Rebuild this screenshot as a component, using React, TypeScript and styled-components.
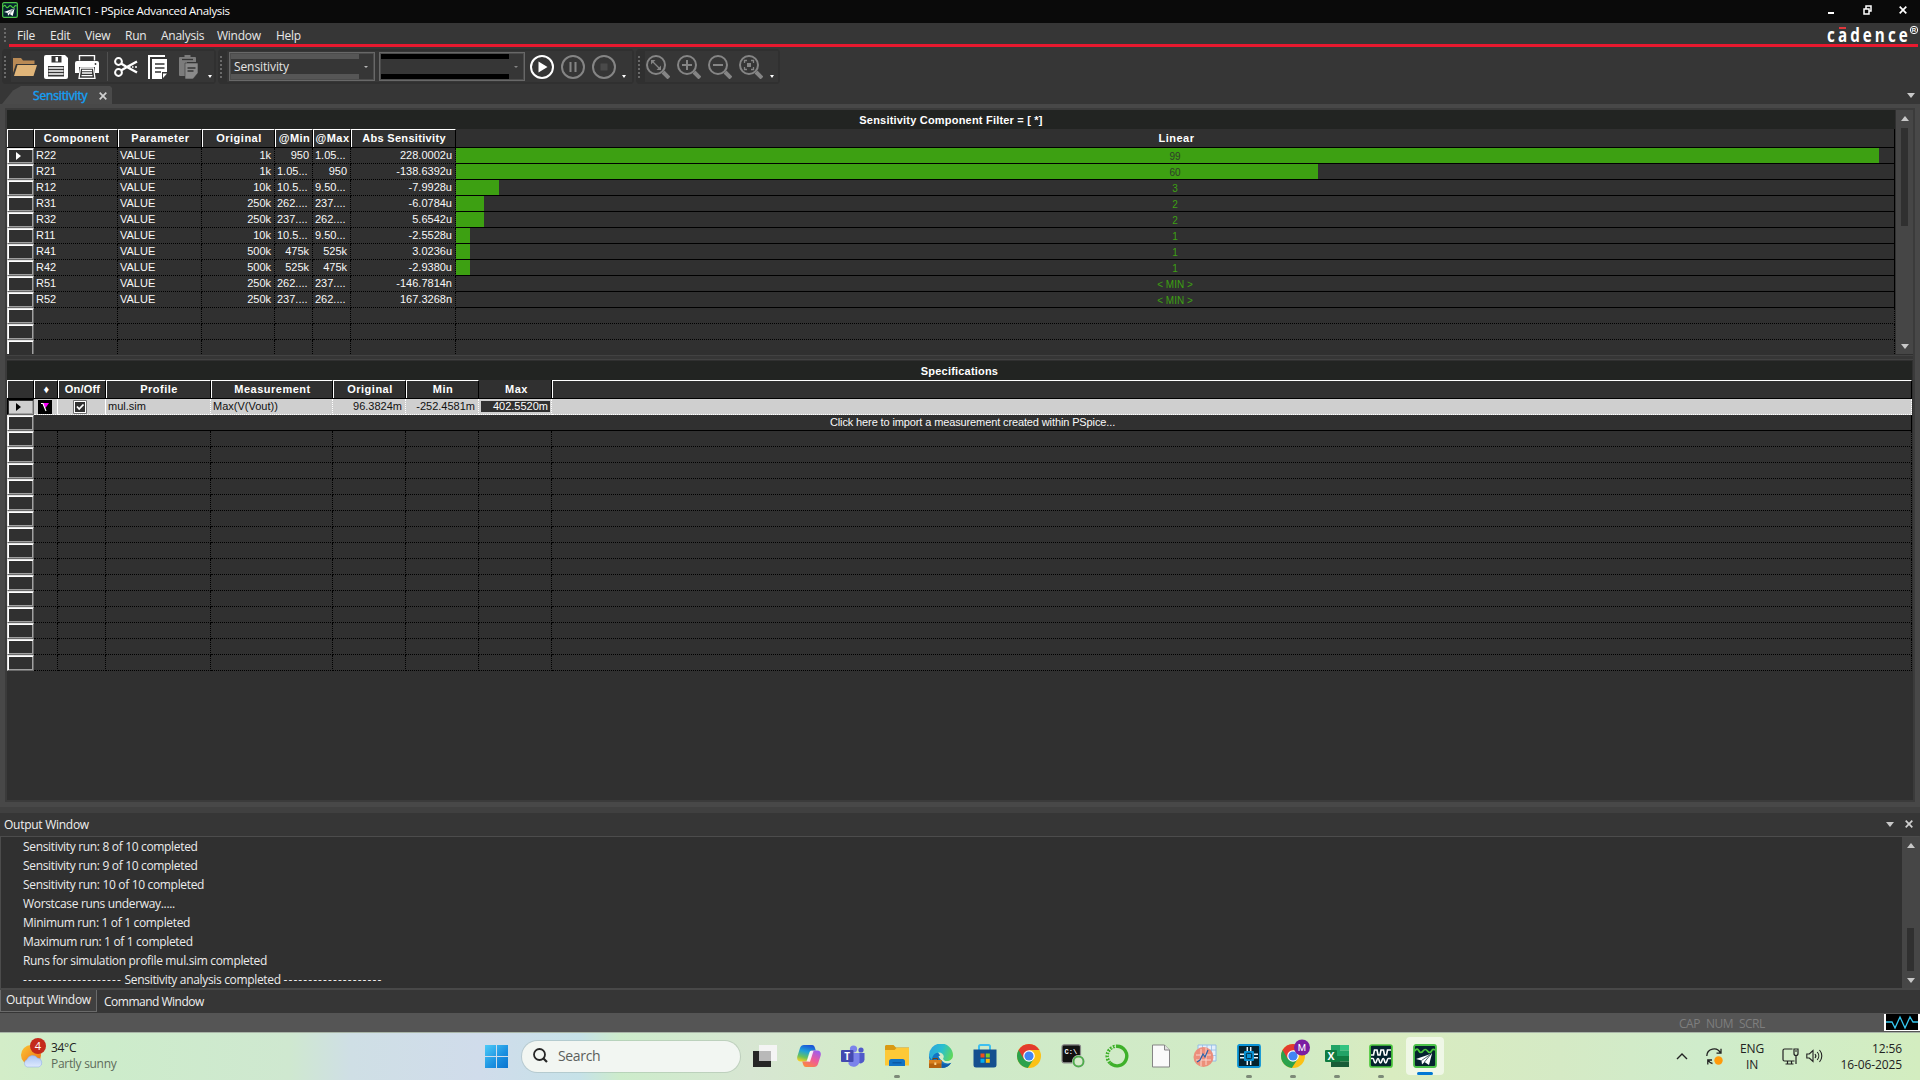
import React from "react";
import styled, { createGlobalStyle, css } from "styled-components";

const UI = `"Open Sans", "Noto Sans", sans-serif`;
const GRID = `"Liberation Sans", Arial, sans-serif`;

const Global = createGlobalStyle`
  * { box-sizing: border-box; }
  html, body { margin: 0; padding: 0; background: #363636; overflow: hidden; }
`;

const Screen = styled.div`
  width: 1920px;
  height: 1080px;
  display: flex;
  flex-direction: column;
  overflow: hidden;
  background: #363636;
  color: #f0f0f0;
  font-family: ${UI};
  font-size: 12px;
  white-space: nowrap;
`;

/* ---------- title bar and menu ---------- */

const TitleBar = styled.header`
  height: 23px;
  flex: none;
  display: flex;
  align-items: center;
  justify-content: space-between;
  background: #0a0a0a;
  padding: 0 13px 3px 2px;
`;
const TitleLeft = styled.div`
  display: flex;
  align-items: center;
  gap: 8px;
  height: 20px;
`;
const Title = styled.span`
  line-height: 20px;
  padding-top: 2px;
  font-size: 11.5px;
  letter-spacing: -0.33px;
  color: #fff;
`;
const WindowButtons = styled.div`
  display: flex;
  align-items: center;
  gap: 27px;
`;

const MenuBar = styled.nav`
  height: 21px;
  flex: none;
  display: flex;
  align-items: center;
  padding: 3px 1px 0 4px;
`;
const Grip = styled.i<{ $h: number }>`
  width: 2px;
  height: ${(p) => p.$h}px;
  flex: none;
  background: repeating-linear-gradient(#6a6a6a 0 2px, transparent 2px 4px);
`;
const MenuItems = styled.div`
  flex: 1;
  display: flex;
  gap: 15px;
  padding: 2px 0 0 11px;
`;
const MenuItem = styled.span<{ $w: number }>`
  width: ${(p) => p.$w}px;
  line-height: 18px;
  letter-spacing: -0.25px;
  color: #e8e8e8;
`;
const BrandMark = styled.svg`
  flex: none;
  margin: -7px 0 -4px;
`;
const RedLine = styled.div`
  height: 3px;
  flex: none;
  margin: 0 2px 0 9px;
  background: #e8192f;
`;

/* ---------- toolbar ---------- */

const ToolRow = styled.div`
  height: 39px;
  flex: none;
  display: flex;
  padding: 2px 0 0 2px;
  gap: 2px;
`;
const ToolGroup = styled.div<{ $w: number }>`
  width: ${(p) => p.$w}px;
  height: 35px;
  display: flex;
  align-items: center;
  padding: 2px 2px 2px 2px;
  border-radius: 4px;
  background: #303030;
`;
const ToolBody = styled.div<{ $gap: number; $pad: number }>`
  flex: 1;
  height: 31px;
  margin-left: 5px;
  display: flex;
  align-items: center;
  gap: ${(p) => p.$gap}px;
  padding-left: ${(p) => p.$pad}px;
  background: #363636;
`;
const ToolSep = styled.i`
  width: 1px;
  height: 29px;
  background: #505050;
  margin: 0 -1px 0 1px;
`;
const DropMark = styled.i`
  width: 0;
  height: 0;
  align-self: flex-end;
  margin-bottom: 4px;
  border: 2.5px solid transparent;
  border-top: 3px solid #fff;
  border-bottom: 0;
`;
const Combo = styled.div<{ $w: number; $stripe: string }>`
  width: ${(p) => p.$w}px;
  height: 29px;
  border: 1px solid #686868;
  box-shadow: inset 0 0 0 1px #4c4c4c;
  padding: 1px;
  display: flex;
  align-items: stretch;
  background: #363636;
  & > span {
    flex: 1;
    border-top: 5px solid ${(p) => p.$stripe};
    border-bottom: 5px solid ${(p) => p.$stripe};
    padding-left: 3px;
    line-height: 15px;
    letter-spacing: -0.1px;
    color: #e4e4e4;
  }
  & > b {
    width: 14px;
    display: flex;
    align-items: center;
    justify-content: center;
  }
`;
const Caret = styled.i<{ $up?: boolean; $c?: string; $s?: number }>`
  width: 0;
  height: 0;
  display: block;
  flex: none;
  border-left: ${(p) => p.$s ?? 4.5}px solid transparent;
  border-right: ${(p) => p.$s ?? 4.5}px solid transparent;
  ${(p) =>
    p.$up
      ? css`border-bottom: ${p.$s ?? 5}px solid ${p.$c ?? "#c8c8c8"};`
      : css`border-top: ${p.$s ?? 5}px solid ${p.$c ?? "#c8c8c8"};`}
`;

/* ---------- document tab ---------- */

const TabStrip = styled.div`
  height: 18px;
  flex: none;
  display: flex;
  align-items: center;
  justify-content: space-between;
  padding: 0 5px 0 2px;
`;
const DocTab = styled.div`
  width: 110px;
  height: 18px;
  display: flex;
  align-items: center;
  justify-content: space-between;
  padding: 1px 5px 0 31px;
  background: #4a4a4a;
  clip-path: polygon(0 100%, 11px 25%, 19px 0, 108px 0, 110px 2px, 110px 100%);
  color: #14a0f5;
  line-height: 18px;
  -webkit-text-stroke: 0.4px #14a0f5;
  letter-spacing: -0.15px;
`;

/* ---------- grids ---------- */

const Workspace = styled.main`
  height: 703px;
  flex: none;
  padding: 4px 5px 5px 5px;
  background: #484848;
`;
const Frame = styled.div`
  height: 694px;
  border: 2px solid #3b3b3b;
  background: #303030;
  display: flex;
  flex-direction: column;
  font-family: ${GRID};
  font-size: 11px;
`;
const TopPane = styled.section`
  height: 244px;
  flex: none;
  display: flex;
  justify-content: space-between;
  overflow: hidden;
`;
const Splitter = styled.div`
  height: 7px;
  flex: none;
  background: #363636;
  border-top: 1px solid #303030;
  border-bottom: 1px solid #303030;
  box-shadow: inset 0 1px 0 #424242, inset 0 -1px 0 #424242;
`;
const Table = styled.div<{ $w: number }>`
  width: ${(p) => p.$w}px;
  flex: none;
`;
const Band = styled.h2`
  height: 19px;
  margin: 0;
  background: #222422;
  text-align: center;
  font-size: 11px;
  line-height: 20px;
  letter-spacing: 0.2px;
  color: #fff;
`;
const HeadRow = styled.div`
  display: flex;
  height: 19px;
  border-bottom: 1px solid #000;
`;
const Head = styled.div<{ $w: number; $plain?: boolean; $ls?: number }>`
  width: ${(p) => p.$w}px;
  flex: none;
  border-right: 1px solid #000;
  ${(p) =>
    !p.$plain &&
    css`
      border-left: 1px solid #fff;
      border-top: 1px solid #fff;
    `}
  padding: ${(p) => (p.$plain ? "1px 0 0 3px" : "0 0 0 1px")};
  text-align: center;
  font-weight: 700;
  line-height: 17px;
  letter-spacing: ${(p) => p.$ls ?? 0.5}px;
  color: #fff;
  overflow: hidden;
`;
const Row = styled.div<{ $tone?: "light" }>`
  display: flex;
  height: 16px;
  background: ${(p) => (p.$tone ? "#cfcfcf" : "#303030")};
  color: ${(p) => (p.$tone ? "#111" : "#f8f8f8")};
`;
const Handle = styled.div<{ $dark?: boolean }>`
  width: 27px;
  flex: none;
  border: 1px solid;
  border-color: ${(p) => (p.$dark ? "#000 #696969 #696969 #000" : "#e3e3e3 #696969 #696969 #e3e3e3")};
  box-shadow: inset 1px 1px 0 #fff, inset -1px -1px 0 #a0a0a0;
  background: #303030;
  display: flex;
  align-items: center;
  padding-left: 8px;
  ${(p) => p.$dark && css`background: #cfcfcf; box-shadow: inset 1px 1px 0 #303030, inset -1px -1px 0 #a0a0a0;`}
`;
const Pointer = styled.i<{ $c: string }>`
  width: 0;
  height: 0;
  border: 4.5px solid transparent;
  border-left: 5px solid ${(p) => p.$c};
  border-right: 0;
`;
const Cell = styled.div<{ $w: number; $a?: string; $line?: string }>`
  width: ${(p) => p.$w}px;
  flex: none;
  border-right: 1px dotted ${(p) => p.$line ?? "#000"};
  border-bottom: 1px dotted ${(p) => p.$line ?? "#000"};
  padding: 0 3px 0 2px;
  line-height: 14px;
  text-align: ${(p) => p.$a ?? "left"};
  overflow: hidden;
`;
const BarCell = styled.div`
  flex: 1;
  display: grid;
  border-right: 1px solid #000;
  border-bottom: 1px solid #000;
  font-size: 10px;
  line-height: 17px;
  & > * { grid-area: 1 / 1; height: 15px; }
`;
const Bar = styled.i`
  display: block;
  background: #3da012;
`;
const BarLabel = styled.span<{ $over?: boolean }>`
  text-align: center;
  color: ${(p) => (p.$over ? "#303a2c" : "#3da012")};
`;
const ImportRow = styled.div`
  flex: 1;
  border-right: 1px solid #000;
  border-bottom: 1px solid #000;
  text-align: center;
  line-height: 14px;
  letter-spacing: -0.12px;
`;
const Selected = styled.span`
  display: block;
  height: 11px;
  margin: 2px -2px 0 0;
  padding-right: 2px;
  line-height: 10px;
  background: #303030;
  color: #fff;
`;
const Flag = styled.div`
  width: 24px;
  flex: none;
  display: flex;
  align-items: center;
  padding-left: 4px;
  border-right: 1px solid #fff;
  border-bottom: 1px dotted #fff;
`;
const CheckCell = styled.div`
  width: 48px;
  flex: none;
  display: flex;
  align-items: center;
  padding-left: 15px;
  border-right: 1px solid #fff;
  border-bottom: 1px dotted #fff;
`;
const ScrollBar = styled.div<{ $h: number; $thumbTop: number; $thumb: number }>`
  width: 17px;
  height: ${(p) => p.$h}px;
  flex: none;
  display: grid;
  justify-items: center;
  align-content: stretch;
  grid-template-rows: ${(p) => p.$thumbTop}px ${(p) => p.$thumb}px 1fr;
  background: #464646;
  padding: 6px 0 5px;
  & > b { width: 7px; height: 100%; background: #303030; }
  & > :last-child { align-self: end; }
  & > :first-child { align-self: start; }
`;

/* ---------- output window ---------- */

const Gutter = styled.div`
  height: 6px;
  flex: none;
  background: #404040;
`;
const OutHead = styled.div`
  height: 23px;
  flex: none;
  display: flex;
  align-items: center;
  justify-content: space-between;
  padding: 0 7px 1px 4px;
  letter-spacing: -0.27px;
`;
const HeadTools = styled.div`
  display: flex;
  align-items: center;
  gap: 11px;
`;
const OutBody = styled.div`
  height: 154px;
  flex: none;
  display: flex;
  justify-content: space-between;
  border: 1px solid #4c4c4c;
  border-bottom: 2px solid #484848;
  border-right-color: #464646;
  background: #303030;
`;
const Log = styled.div`
  padding-left: 22px;
`;
const LogLine = styled.div`
  height: 19px;
  line-height: 19px;
  letter-spacing: -0.33px;
  color: #ececec;
`;
const Dashes = styled.span`
  letter-spacing: 1.08px;
`;
const OutTabs = styled.div`
  height: 23px;
  flex: none;
  display: flex;
  align-items: flex-start;
`;
const OutTab = styled.div<{ $on?: boolean }>`
  height: 22px;
  line-height: ${(p) => (p.$on ? 20 : 23)}px;
  padding: 0 5px;
  letter-spacing: -0.5px;
  ${(p) =>
    p.$on &&
    css`
      width: 97px;
      border: 1px solid #6a6a6a;
      border-top: 0;
      background: #404040;
      margin-right: 2px;
      letter-spacing: -0.27px;
    `}
`;
const StatusBar = styled.footer`
  height: 19px;
  flex: none;
  display: flex;
  align-items: center;
  justify-content: flex-end;
  background: #555;
  color: #7e7e7e;
`;
const Keys = styled.div`
  display: flex;
  gap: 6px;
  width: 205px;
  padding-top: 2px;
  letter-spacing: -0.5px;
`;

/* ---------- taskbar ---------- */

const TaskBar = styled.div`
  height: 48px;
  flex: none;
  display: flex;
  align-items: stretch;
  border-top: 1px solid #a9b5a8;
  background: linear-gradient(
    90deg,
    #d3edc8 0, #cdeccb 110px, #cfe8d0 290px, #cfdfe5 350px, #d0dceb 480px,
    #c6e2e8 580px, #cdeccb 620px, #d7e6d2 750px, #d2ecc7 880px, #cfeac9 960px,
    #d2ebc5 1300px, #d9ecc0 1390px, #d5eac5 1560px, #cfeccb 1700px, #d3edc0 1920px
  );
  color: #222;
`;
const Weather = styled.div`
  width: 485px;
  padding: 4px 0 0 19px;
  display: flex;
  gap: 5px;
`;
const WeatherText = styled.div`
  padding-top: 3px;
  line-height: 16px;
  letter-spacing: -0.3px;
  & > div + div { color: #5d6b5a; }
`;
const Start = styled.div`
  width: 37px;
  padding-top: 12px;
`;
const SearchBox = styled.div`
  width: 218px;
  height: 31px;
  margin: 8px 3px 0 0;
  border-radius: 16px;
  background: #f2f6f2;
  box-shadow: 0 0 0 1px rgba(120, 140, 130, 0.25);
  display: flex;
  align-items: center;
  gap: 10px;
  padding: 0 0 2px 11px;
  font-size: 14px;
  letter-spacing: -0.35px;
  color: #5c5f5c;
`;
const Task = styled.div<{ $state?: "open" | "active" }>`
  width: 44px;
  height: 47px;
  display: grid;
  grid-template-rows: 39px 3px;
  justify-items: center;
  align-items: center;
  padding-top: 3px;
  & > svg { grid-area: 1 / 1; }
  & > i {
    grid-area: 2 / 1;
    width: ${(p) => (p.$state === "active" ? 16 : 6)}px;
    height: 3px;
    border-radius: 2px;
    background: ${(p) => (p.$state === "active" ? "#0078d4" : "#7d8a78")};
  }
  ${(p) =>
    p.$state === "active" &&
    css`
      background: rgba(255, 255, 255, 0.6);
      width: 38px;
      height: 38px;
      margin: 4px 3px 0;
      border-radius: 4px;
      padding-top: 0;
      grid-template-rows: 35px 3px;
      & > svg { margin-top: 2px; }
    `}
`;
const Tray = styled.div`
  flex: 1;
  display: flex;
  justify-content: flex-end;
  align-items: center;
  padding: 0 18px 1px 0;
`;
const TrayText = styled.div<{ $w: number; $a: string }>`
  width: ${(p) => p.$w}px;
  text-align: ${(p) => p.$a};
  line-height: 16px;
  padding-top: 2px;
  letter-spacing: -0.1px;
`;
const TrayIcon = styled.div<{ $mr: number }>`
  display: flex;
  margin-right: ${(p) => p.$mr}px;
`;

/* ---------- icons ---------- */

const CloseX = ({ s = 8, c = "#d0d0d0" }: { s?: number; c?: string }) => (
  <svg width={s} height={s} viewBox="0 0 8 8" stroke={c} strokeWidth="1.7">
    <path d="M.7.7l6.6 6.6M7.3.7L.7 7.3" />
  </svg>
);

const PSpiceIcon = ({ s }: { s: number }) => (
  <svg width={s} height={s} viewBox="0 0 24 24">
    <rect x="1" y="1" width="22" height="22" rx="2" fill="#04222e" stroke="#4cc24a" strokeWidth="1.8" />
    <path d="M2 7c1.500-3 3-2 4 0s2.500 2 4 0 3-2 4.500 0 3 2 4 0 2-2 3.500-1" fill="none" stroke="#4cc83c" strokeWidth="1.700" />
    <path d="M3 15L19 9.500 16 21l-4.500-3L9 20.500l-.5-4z" fill="#fff" />
    <path d="M8.500 16.500L18 10l-6.500 8" fill="none" stroke="#04222e" strokeWidth=".7" />
  </svg>
);

const WaveIcon = () => (
  <svg width="24" height="24" viewBox="0 0 24 24" fill="none">
    <rect x="1" y="1" width="22" height="22" rx="2" fill="#04222e" stroke="#4cc83c" strokeWidth="1.700" />
    <path d="M2 11h2.500l1-5H8l1 5h2l1-5h2.500l1 5h2l1-5H22" stroke="#fff" strokeWidth="1.600" />
    <path d="M2 14.500h2c1.200 0 .8 4.500 2.300 4.500s1.200-4.500 2.700-4.500 1 4.500 2.500 4.500 1.200-4.500 2.700-4.500 1 4.500 2.500 4.500 1.200-4.500 2.500-4.500H22" stroke="#fff" strokeWidth="1.600" />
  </svg>
);

const Lens = ({ children }: { children: React.ReactNode }) => (
  <svg width="24" height="24" viewBox="0 0 24 24" fill="none" stroke="#858585" strokeWidth="2">
    <circle cx="10" cy="10" r="9" />
    <path d="M17 17l6 6" strokeWidth="4" />
    {children}
  </svg>
);

const Chrome = ({ badge }: { badge?: boolean }) => (
  <svg width="30" height="32" viewBox="-3 -4 30 32" overflow="visible">
    <circle cx="12" cy="12" r="12" fill="#fbc116" />
    <path d="M12 12L1.600 6A12 12 0 0 0 10.800 23.950L17 14.500z" fill="#2ba24c" />
    <path d="M12 12V6h10.400A12 12 0 0 0 1.600 6L6.800 15z" fill="#e33b2e" />
    <circle cx="12" cy="12" r="5.800" fill="#fff" />
    <circle cx="12" cy="12" r="4.600" fill="#4285f4" />
    {badge && (
      <>
        <circle cx="21" cy="3.500" r="8" fill="#7b1fa2" />
        <text x="21" y="7" textAnchor="middle" fontSize="9.500" fontFamily="Roboto" fill="#fff">M</text>
      </>
    )}
  </svg>
);

const Weather34 = () => (
  <svg width="27" height="32" viewBox="0 0 27 32">
    <defs>
      <linearGradient id="sun" x1="0" y1="0" x2="1" y2="1">
        <stop offset="0" stopColor="#fbc534" />
        <stop offset="1" stopColor="#ee6d12" />
      </linearGradient>
      <linearGradient id="cloud" x1="0" y1="0" x2="0" y2="1">
        <stop offset="0" stopColor="#a9c4f5" />
        <stop offset="1" stopColor="#dfeafd" />
      </linearGradient>
    </defs>
    <circle cx="12" cy="18" r="10" fill="url(#sun)" />
    <path d="M8 30a4 4 0 0 1 0-7.500 6 6 0 0 1 10.500-1.500A4.700 4.700 0 0 1 20 30z" fill="url(#cloud)" stroke="#8ba8e6" strokeWidth=".5" />
    <circle cx="19" cy="9" r="8" fill="#c42b1c" />
    <text x="19" y="13" fontSize="11" textAnchor="middle" fill="#fff" fontFamily="Open Sans">4</text>
  </svg>
);

const WinLogo = () => (
  <svg width="23" height="23" viewBox="0 0 23 23">
    <defs>
      <linearGradient id="win" x1="0" y1="0" x2="1" y2="1">
        <stop offset="0" stopColor="#4ccbf8" />
        <stop offset=".6" stopColor="#1a8fe0" />
        <stop offset="1" stopColor="#0a74cf" />
      </linearGradient>
    </defs>
    <path d="M0 0h11v11H0zM12 0h11v11H12zM0 12h11v11H0zM12 12h11v11H12z" fill="url(#win)" />
  </svg>
);

const TaskView = () => (
  <svg width="24" height="24" viewBox="0 0 24 24">
    <rect x="0" y="7" width="18" height="16" fill="#262626" />
    <rect x="6" y="1" width="18" height="16" fill="#f4f4f4" />
    <rect x="6" y="7" width="12" height="10" fill="#b9b9b9" />
  </svg>
);

const Copilot = () => (
  <svg width="24" height="22" viewBox="0 0 24 22">
    <defs>
      <linearGradient id="cpa" x1=".6" y1="0" x2=".3" y2="1">
        <stop offset="0" stopColor="#1b54d8" />
        <stop offset=".4" stopColor="#1ea2d8" />
        <stop offset=".75" stopColor="#6cc35a" />
        <stop offset="1" stopColor="#f2cf25" />
      </linearGradient>
      <linearGradient id="cpb" x1=".8" y1="0" x2=".2" y2="1">
        <stop offset="0" stopColor="#9a5cf0" />
        <stop offset=".5" stopColor="#ee5a9a" />
        <stop offset="1" stopColor="#fb8a3c" />
      </linearGradient>
    </defs>
    <path d="M7 0h8c2 0 2.600 1.500 3 3l.8 2.500H15c-1.500 0-2.300.8-2.800 2.300L10 15c-.5 1.200-1.200 1.500-2.500 1.500H4C.5 16.500-.3 14 .4 11.300L3 3c.7-2 2-3 4-3z" fill="url(#cpa)" />
    <path d="M17 22H9c-2 0-2.600-1.500-3-3l-.8-2.500H9c1.500 0 2.300-.8 2.800-2.300L14 7c.5-1.200 1.200-1.500 2.500-1.500H20c3.500 0 4.300 2.500 3.600 5.200L21 19c-.7 2-2 3-4 3z" fill="url(#cpb)" />
    <path d="M13.500 6l-3.500 10.500 3 .2L16.500 6z" fill="#fff" opacity=".85" />
  </svg>
);

const Teams = () => (
  <svg width="24" height="22" viewBox="0 0 24 22">
    <circle cx="20" cy="5" r="2.600" fill="#5059c9" />
    <path d="M16 8h7.500v6.500a4 4 0 0 1-6 3.300z" fill="#5059c9" />
    <circle cx="12.500" cy="4" r="3.600" fill="#7b83eb" />
    <path d="M8 8h10.500v7a6 6 0 0 1-11 4z" fill="#7b83eb" />
    <rect x="0" y="5" width="12.500" height="12" rx="1" fill="#4349b0" />
    <text x="6.200" y="14.500" fontSize="10" fontWeight="700" textAnchor="middle" fill="#fff" fontFamily="Open Sans">T</text>
  </svg>
);

const Explorer = () => (
  <svg width="24" height="22" viewBox="0 0 24 22">
    <path d="M0 1.500C0 .6.600 0 1.500 0h7L11 2.500h13V12H0z" fill="#d99a12" />
    <path d="M0 5h9.500l2-2H24v17.500H0z" fill="#fdc937" />
    <path d="M4 21v-4.500c0-1.500.8-2.500 2.300-2.500h11.400c1.500 0 2.300 1 2.300 2.500V21z" fill="#1173c6" />
    <rect x="7.500" y="17" width="9" height="1.500" fill="#0b5aa6" />
  </svg>
);

const Edge = () => (
  <svg width="24" height="24" viewBox="0 0 24 24">
    <defs>
      <linearGradient id="edge" x1="0" y1=".3" x2="1" y2=".6">
        <stop offset="0" stopColor="#2da4dd" />
        <stop offset=".5" stopColor="#29bfd0" />
        <stop offset="1" stopColor="#5fd85a" />
      </linearGradient>
    </defs>
    <path d="M0 12C0 18 4 24 13 24c4 0 7-2 9.500-5.500-4 1.500-9 0-9.500-4.500L8 7z" fill="#1374c4" />
    <path d="M0 12A12 12 0 0 1 24 11c0 4-3 6-6 6s-4.500-1.500-3.500-3.500C15.500 11 13 8.500 10 8.500 6 8.500 3 11.500 3 16z" fill="url(#edge)" />
    <path d="M9.500 12.500c2.500-2.500 5-1 4.800.8-1 2 .5 4 3.700 4 2 0 3.500-.5 5-1.800l-.5 3c-3 1.500-6.500 1-8.500-.8-2-1.500-3.500-3-4.500-5.200z" fill="#d4ecc8" />
    <path d="M13 19.500c3 1.500 6.500 1 9-.5-2 3.500-6 5-9 4.800z" fill="#0f5aa8" />
    <rect x="0" y="16" width="12.500" height="8" fill="#b5620f" />
    <path d="M0 16h12.500v3.500H0z" fill="#d9801f" />
    <path d="M4 16v-1.500h4.500V16" fill="none" stroke="#7a4209" />
    <rect x="5.300" y="18.500" width="2" height="2.500" fill="#fbd28b" />
  </svg>
);

const Store = () => (
  <svg width="24" height="24" viewBox="0 0 24 24">
    <path d="M6 6V2.500C6 1.500 6.700 1 7.500 1h8c.8 0 1.500.5 1.500 1.500V6" fill="none" stroke="#3fc0f0" strokeWidth="2" />
    <path d="M.5 5.500h23V21c0 1.700-1 2.500-2.500 2.500H3C1.500 23.500.5 22.700.5 21z" fill="#15508f" />
    <path d="M7.500 9.500h4v4h-4z" fill="#f1511b" />
    <path d="M12.800 9.500h4v4h-4z" fill="#80cc28" />
    <path d="M7.500 14.800h4v4h-4z" fill="#00adef" />
    <path d="M12.800 14.800h4v4h-4z" fill="#fbbc09" />
  </svg>
);

const Cmd = () => (
  <svg width="24" height="24" viewBox="0 0 24 24">
    <rect x="1" y=".8" width="18.500" height="18" rx="2" fill="#111" stroke="#8a8a8a" strokeWidth="1.200" />
    <text x="3.500" y="9.500" fontSize="7" fontWeight="700" fill="#fff" fontFamily="Liberation Mono">C:\</text>
    <circle cx="17.500" cy="17.500" r="5" fill="#d4ecc8" stroke="#d8d8d8" strokeWidth="3" />
    <circle cx="17.500" cy="17.500" r="5" fill="none" stroke="#4fae4b" strokeWidth="2" />
  </svg>
);

const Anaconda = () => (
  <svg width="24" height="24" viewBox="0 0 24 24" fill="none" stroke="#3eb02a">
    <path d="M12 2.200a9.800 9.800 0 1 1-7 16.700" strokeWidth="3.400" />
    <path d="M5 18.900A9.800 9.800 0 0 1 12 2.200" strokeWidth="3.400" strokeDasharray="2 1.100" />
    <path d="M3.800 17.500A9.800 9.800 0 0 1 10 2.500" strokeWidth="1" stroke="#d4ecc8" strokeDasharray="1.500 1.500" />
  </svg>
);

const Paper = () => (
  <svg width="18" height="24" viewBox="0 0 18 24">
    <path d="M.5 1h12l5 5v17H.5z" fill="#fafafa" stroke="#858585" />
    <path d="M12.500 1v5h5" fill="#e2e2e2" stroke="#858585" />
  </svg>
);

const ChartIcon = () => (
  <svg width="24" height="24" viewBox="0 0 24 24">
    <path d="M5 1h18v16H5z" fill="#e4effb" stroke="#94bde6" />
    <path d="M9.500 1v16M14 1v16M18.500 1v16M5 6h18M5 11.500h18" stroke="#94bde6" strokeWidth=".8" />
    <circle cx="10.500" cy="13" r="10" fill="#ef8873" opacity=".92" />
    <path d="M3 11h15M3 16h15M8 5v17M13 4v17" stroke="#fbd5cc" strokeWidth="1" />
    <path d="M4 18l3-2 3-6 2 3 3-7" fill="none" stroke="#2b62a8" strokeWidth="1.200" />
  </svg>
);

const Chip = () => (
  <svg width="24" height="24" viewBox="0 0 24 24">
    <rect x="1" y="1" width="22" height="22" rx="1.500" fill="#04222e" stroke="#0a93d6" strokeWidth="1.800" />
    <path d="M3 10.300h4M3 13.700h4M17 10.300h4M17 13.700h4M10.300 3v4M13.700 3v4M10.300 17v4M13.700 17v4" stroke="#e8f4fa" strokeWidth="1.500" />
    <rect x="7" y="7" width="10" height="10" rx="1" fill="#0a93d6" />
    <rect x="9.300" y="9.300" width="5.400" height="5.400" rx="1" fill="#0a93d6" stroke="#04222e" strokeWidth="1" />
  </svg>
);

const Excel = () => (
  <svg width="24" height="22" viewBox="0 0 24 22">
    <path d="M6 0h9v22H6z" fill="#21a366" />
    <path d="M15 0h9v5.500h-9z" fill="#33c481" />
    <path d="M15 5.500h9V11h-9z" fill="#21a366" />
    <path d="M6 11h9v5.500H6z" fill="#107c41" />
    <path d="M15 11h9v5.500h-9z" fill="#107c41" />
    <path d="M6 16.500h18V22H6z" fill="#185c37" />
    <rect x="0" y="5" width="12" height="12" rx="1" fill="#107c41" />
    <text x="6" y="14.800" fontSize="10.500" fontWeight="700" textAnchor="middle" fill="#fff" fontFamily="Open Sans">X</text>
  </svg>
);

/* ---------- data ---------- */

const cols = [84, 84, 73, 38, 38, 105];
const chartWidth = 1438;

type Sens = [string, string, string, string, string, number];
const sens: Sens[] = [
  ["R22", "1k", "950", "1.05...", "228.0002u", 99],
  ["R21", "1k", "1.05...", "950", "-138.6392u", 60],
  ["R12", "10k", "10.5...", "9.50...", "-7.9928u", 3],
  ["R31", "250k", "262....", "237....", "-6.0784u", 2],
  ["R32", "250k", "237....", "262....", "5.6542u", 2],
  ["R11", "10k", "10.5...", "9.50...", "-2.5528u", 1],
  ["R41", "500k", "475k", "525k", "3.0236u", 1],
  ["R42", "500k", "525k", "475k", "-2.9380u", 1],
  ["R51", "250k", "262....", "237....", "-146.7814n", 0],
  ["R52", "250k", "237....", "262....", "167.3268n", 0],
];

const specCols = [24, 48, 105, 122, 73, 73, 73];

const log = [
  "Sensitivity run: 8 of 10 completed",
  "Sensitivity run: 9 of 10 completed",
  "Sensitivity run: 10 of 10 completed",
  "Worstcase runs underway.....",
  "Minimum run: 1 of 1 completed",
  "Maximum run: 1 of 1 completed",
  "Runs for simulation profile mul.sim completed",
];

const menu: [string, number][] = [
  ["File", 18], ["Edit", 20], ["View", 25], ["Run", 21], ["Analysis", 41], ["Window", 44], ["Help", 30],
];

/* ---------- sections ---------- */

function Tools() {
  return (
    <ToolRow>
      <ToolGroup $w={214}>
        <Grip $h={22} />
        <ToolBody $gap={7} $pad={2}>
          <svg width="24" height="18" viewBox="0 0 24 18">
            <path d="M0 0h8l2 2.500h11.500V6H3L0 15z" fill="#b98a55" />
            <path d="M4.500 7H24l-3.500 11H1z" fill="#e0b579" />
          </svg>
          <svg width="24" height="24" viewBox="0 0 24 24">
            <path d="M2 0h19l3 3v19a2 2 0 0 1-2 2H2a2 2 0 0 1-2-2V2a2 2 0 0 1 2-2z" fill="#fff" />
            <path d="M7.500 1h10v6.500h-10zM4 11h16v10.500H4z" fill="#363636" />
            <path d="M11.500 2h2.500v4.500h-2.500z" fill="#fff" />
            <path d="M4.500 13h15M4.500 16h15M4.500 19h15" stroke="#fff" strokeWidth="1.400" />
          </svg>
          <svg width="24" height="24" viewBox="0 0 24 24">
            <path d="M4.500 5.500v-5h15v5" fill="none" stroke="#fff" strokeWidth="1.400" />
            <path d="M2 6h20a2 2 0 0 1 2 2v10h-4v-6H4v6H0V8a2 2 0 0 1 2-2z" fill="#fff" />
            <path d="M5.500 13h13l1.500 10.500H4z" fill="#363636" stroke="#fff" strokeWidth="1.300" />
            <path d="M7 15.500h10M7 18h10M6.500 20.700h11" stroke="#fff" strokeWidth="1.300" />
            <circle cx="20.500" cy="9" r=".9" fill="#363636" />
          </svg>
          <ToolSep />
          <svg width="24" height="20" viewBox="0 0 24 20" fill="none" stroke="#fff">
            <circle cx="4.500" cy="4.500" r="3.400" strokeWidth="2" />
            <circle cx="4.500" cy="15.500" r="3.400" strokeWidth="2" />
            <path d="M7 6.500L12 9.500 23 15.500M7 13.500L12 10.500 23 4.500" strokeWidth="2.400" />
            <path d="M15 10h1.500M18 10h1.500M21 10h2" strokeWidth="1.400" />
          </svg>
          <svg width="25" height="24" viewBox="-3 0 25 24">
            <path d="M1 24V1h16" fill="none" stroke="#fff" strokeWidth="2" />
            <path d="M4 4h15v13h-5v7H4z" fill="#fff" />
            <path d="M15 18.500h4L15 23z" fill="#fff" />
            <path d="M7 9h9.500M7 13h9.500M7 17h6" stroke="#363636" strokeWidth="1.500" />
          </svg>
          <svg width="24" height="24" viewBox="-2 0 24 24">
            <path d="M0 3a1 1 0 0 1 1-1h4.500V0h6v2H16a1 1 0 0 1 1 1v4H8v14H1a1 1 0 0 1-1-1z" fill="#7c7c7c" />
            <path d="M3 4.500h11" stroke="#363636" strokeWidth="1.300" />
            <path d="M6 8h13v10l-5 6H6z" fill="#8a8a8a" stroke="#363636" strokeWidth=".6" />
            <path d="M8.500 13h8M8.500 16h6" stroke="#363636" strokeWidth="1.300" />
          </svg>
          <DropMark />
        </ToolBody>
      </ToolGroup>
      <ToolGroup $w={416}>
        <Grip $h={22} />
        <ToolBody $gap={4} $pad={2}>
          <Combo $w={146} $stripe="#565656">
            <span>Sensitivity</span>
            <b><Caret $s={2.5} $c="#b8b8b8" /></b>
          </Combo>
          <Combo $w={146} $stripe="#000">
            <span />
            <b><Caret $s={2.5} $c="#858585" /></b>
          </Combo>
          <svg width="89" height="24" viewBox="-1 0 89 24" fill="none">
            <circle cx="12" cy="12" r="11" stroke="#fff" strokeWidth="2" />
            <path d="M8.500 6.500v11l9-5.500z" fill="#fff" />
            <circle cx="43" cy="12" r="11" stroke="#858585" strokeWidth="2" />
            <path d="M40.500 7v10M45.500 7v10" stroke="#858585" strokeWidth="2" />
            <circle cx="74" cy="12" r="11" stroke="#858585" strokeWidth="2" />
            <path d="M70.500 8.500h7v7h-7z" fill="#4a4a4a" />
          </svg>
          <DropMark />
        </ToolBody>
      </ToolGroup>
      <ToolGroup $w={144}>
        <Grip $h={22} />
        <ToolBody $gap={7} $pad={1}>
          <Lens>
            <path d="M7 7l6 6" strokeWidth="1.200" />
            <path d="M5 9.500V5h4.500zM15 10.500V15h-4.500z" fill="#858585" stroke="none" />
          </Lens>
          <Lens><path d="M5 10h10M10 5v10" /></Lens>
          <Lens><path d="M5 10h10" /></Lens>
          <Lens>
            <path d="M5.500 8V5.500H8M12 5.500h2.500V8M14.500 12v2.500H12M8 14.500H5.500V12" strokeWidth="1.300" />
            <rect x="8" y="8" width="4" height="4" fill="#858585" stroke="none" />
          </Lens>
          <DropMark />
        </ToolBody>
      </ToolGroup>
    </ToolRow>
  );
}

function SensitivityGrid() {
  const align = ["left", "left", "right", "right", "right", "right"];
  return (
    <TopPane>
      <Table $w={1888}>
        <Band>Sensitivity Component Filter = [ *]</Band>
        <HeadRow>
          <Head $w={27} />
          {["Component", "Parameter", "Original", "@Min", "@Max", "Abs Sensitivity"].map((h, i) => (
            <Head key={h} $w={cols[i]} $ls={h === "Abs Sensitivity" ? 0.32 : undefined}>{h}</Head>
          ))}
          <Head $w={1439} $plain>Linear</Head>
        </HeadRow>
        {sens.map(([c, o, mn, mx, abs, v], r) => (
          <Row key={c}>
            <Handle>{r === 0 && <Pointer $c="#fff" />}</Handle>
            {[c, "VALUE", o, mn, mx, abs].map((t, i) => (
              <Cell key={i} $w={cols[i]} $a={t.endsWith("...") ? "left" : align[i]}>{t}</Cell>
            ))}
            <BarCell>
              <Bar style={{ width: Math.floor((chartWidth * v) / 100) }} />
              <BarLabel $over={v > 50}>{v || "< MIN >"}</BarLabel>
            </BarCell>
          </Row>
        ))}
        {[0, 1, 2].map((r) => (
          <Row key={r}>
            <Handle />
            {cols.map((w, i) => <Cell key={i} $w={w} />)}
            <Cell $w={1439} />
          </Row>
        ))}
      </Table>
      <ScrollBar $h={244} $thumbTop={12} $thumb={98}>
        <Caret $up /><b /><Caret />
      </ScrollBar>
    </TopPane>
  );
}

function SpecGrid() {
  return (
    <Table $w={1905}>
      <Band>Specifications</Band>
      <HeadRow>
        <Head $w={27} />
        {["\u2666", "On/Off", "Profile", "Measurement", "Original", "Min"].map((h, i) => (
          <Head key={h} $w={specCols[i]} $ls={i < 2 ? 0.2 : undefined}>{h}</Head>
        ))}
        <Head $w={73} $plain>Max</Head>
        <Head $w={1360} />
      </HeadRow>
      <Row $tone="light">
        <Handle $dark><Pointer $c="#000" /></Handle>
        <Flag>
          <svg width="14" height="14" viewBox="0 0 14 14">
            <path d="M0 0h14v14H0z" fill="#000" />
            <path d="M5 3h6L7.500 8z" fill="#f0f" />
            <path d="M3 3.500h2l3 7.500" stroke="#fff" fill="none" strokeWidth="1.200" />
          </svg>
        </Flag>
        <CheckCell>
          <svg width="14" height="14" viewBox="0 0 14 14">
            <path d="M.5.5h13v13H.5z" fill="#fff" stroke="#707070" />
            <path d="M2 2h10v10H2z" fill="#303030" />
            <path d="M4 6.500l2.200 2.500L10.500 4.500" fill="none" stroke="#fff" strokeWidth="1.800" />
          </svg>
        </CheckCell>
        <Cell $w={105} $line="#fff">mul.sim</Cell>
        <Cell $w={122} $line="#fff">Max(V(Vout))</Cell>
        <Cell $w={73} $line="#fff" $a="right">96.3824m</Cell>
        <Cell $w={73} $line="#fff" $a="right">-252.4581m</Cell>
        <Cell $w={73} $line="#fff" $a="right"><Selected>402.5520m</Selected></Cell>
        <Cell $w={1360} $line="#fff" />
      </Row>
      <Row>
        <Handle />
        <ImportRow>Click here to import a measurement created within PSpice...</ImportRow>
      </Row>
      {Array.from({ length: 15 }, (_, r) => (
        <Row key={r}>
          <Handle />
          {specCols.map((w, i) => <Cell key={i} $w={w} />)}
          <Cell $w={1360} />
        </Row>
      ))}
    </Table>
  );
}

function Taskbar() {
  return (
    <TaskBar>
      <Weather>
        <Weather34 />
        <WeatherText><div>34°C</div><div>Partly sunny</div></WeatherText>
      </Weather>
      <Start><WinLogo /></Start>
      <SearchBox>
        <svg width="15" height="15" viewBox="0 0 15 15" fill="none" stroke="#262626" strokeWidth="1.800">
          <circle cx="6.500" cy="6.500" r="5.500" /><path d="M10.500 10.500L14 14" strokeWidth="2.200" />
        </svg>
        Search
      </SearchBox>
      <Task><TaskView /></Task>
      <Task><Copilot /></Task>
      <Task><Teams /></Task>
      <Task $state="open"><Explorer /><i /></Task>
      <Task><Edge /></Task>
      <Task><Store /></Task>
      <Task><Chrome /></Task>
      <Task><Cmd /></Task>
      <Task><Anaconda /></Task>
      <Task><Paper /></Task>
      <Task><ChartIcon /></Task>
      <Task $state="open"><Chip /><i /></Task>
      <Task $state="open"><Chrome badge /><i /></Task>
      <Task $state="open"><Excel /><i /></Task>
      <Task $state="open"><WaveIcon /><i /></Task>
      <Task $state="active"><PSpiceIcon s={24} /><i /></Task>
      <Tray>
        <TrayIcon $mr={18}>
          <svg width="12" height="7" viewBox="0 0 12 7" fill="none" stroke="#222" strokeWidth="1.400">
            <path d="M1 6l5-5 5 5" />
          </svg>
        </TrayIcon>
        <TrayIcon $mr={14}>
          <svg width="17" height="17" viewBox="0 0 17 17" fill="none" stroke="#222" strokeWidth="1.300">
            <path d="M.8 8A7.200 7.200 0 0 1 14.500 5M15 .8V5.200H10.500M6.500 15.500A7.200 7.200 0 0 1 2 12M1.800 16.500V12H6" />
            <circle cx="12.500" cy="12.500" r="4.200" fill="#ff9a0a" stroke="none" />
          </svg>
        </TrayIcon>
        <TrayText $w={30} $a="center">ENG<br />IN</TrayText>
        <TrayIcon $mr={7}>
          <svg width="32" height="17" viewBox="-15 0 32 17" fill="none" stroke="#222" strokeWidth="1.200">
            <path d="M10.500 1H2.500A1.500 1.500 0 0 0 1 2.500v9A1.500 1.500 0 0 0 2.500 13h10M5.500 13v3M9.500 13v3M3.500 16h8M12 1h4v4.500a2 2 0 0 1-4 0zM14 8v8M13 3h2" />
          </svg>
        </TrayIcon>
        <TrayIcon $mr={13}>
          <svg width="17" height="14" viewBox="0 0 17 14" fill="none" stroke="#222" strokeWidth="1.100">
            <path d="M.8 5v4h2.500L7 12.500v-11L3.300 5zM9 5a3 3 0 0 1 0 4M11.200 3a6 6 0 0 1 0 8M13.500 1a9 9 0 0 1 0 12" />
          </svg>
        </TrayIcon>
        <TrayText $w={66} $a="right">12:56<br />16-06-2025</TrayText>
      </Tray>
    </TaskBar>
  );
}

export default function App() {
  return (
    <Screen>
      <Global />
      <TitleBar>
        <TitleLeft>
          <PSpiceIcon s={16} />
          <Title>SCHEMATIC1 - PSpice Advanced Analysis</Title>
        </TitleLeft>
        <WindowButtons>
          <svg width="9" height="9" viewBox="0 0 9 9"><path d="M1 6h6v2H1z" fill="#fff" /></svg>
          <svg width="9" height="10" viewBox="0 0 9 10" fill="none" stroke="#fff" strokeWidth="1.500">
            <path d="M1 4h5v5H1zM3 4V1h5v5H6" />
          </svg>
          <CloseX c="#fff" />
        </WindowButtons>
      </TitleBar>
      <MenuBar>
        <Grip $h={14} />
        <MenuItems>
          {menu.map(([m, w]) => <MenuItem key={m} $w={w}>{m}</MenuItem>)}
        </MenuItems>
        <BrandMark width="92" height="30" viewBox="0 -6 92 30">
          <text x="0" y="17" transform="scale(.8 1)" textLength="101" fontSize="19" fontWeight="700" fontFamily="Open Sans" fill="#fff">cadence</text>
          <rect x="12" y="2" width="7" height="2" fill="#e0373c" />
          <circle cx="87" cy="5" r="3.700" fill="none" stroke="#fff" />
          <text x="87" y="7.300" textAnchor="middle" fontSize="6" fontWeight="700" fontFamily="Liberation Sans" fill="#fff">R</text>
        </BrandMark>
      </MenuBar>
      <RedLine />
      <Tools />
      <TabStrip>
        <DocTab>Sensitivity <CloseX c="#d0d0d0" /></DocTab>
        <Caret />
      </TabStrip>
      <Workspace>
        <Frame>
          <SensitivityGrid />
          <Splitter />
          <SpecGrid />
        </Frame>
      </Workspace>
      <Gutter />
      <OutHead>
        Output Window
        <HeadTools><Caret /><CloseX /></HeadTools>
      </OutHead>
      <OutBody>
        <Log>
          {log.map((l) => <LogLine key={l}>{l}</LogLine>)}
          <LogLine>
            <Dashes>--------------------</Dashes> Sensitivity analysis completed <Dashes>--------------------</Dashes>
          </LogLine>
        </Log>
        <ScrollBar $h={151} $thumbTop={85} $thumb={43}>
          <Caret $up /><b /><Caret />
        </ScrollBar>
      </OutBody>
      <OutTabs>
        <OutTab $on>Output Window</OutTab>
        <OutTab>Command Window</OutTab>
      </OutTabs>
      <StatusBar>
        <Keys><span>CAP</span><span>NUM</span><span>SCRL</span></Keys>
        <svg width="36" height="17" viewBox="0 0 36 17">
          <path d="M0 0h36v17H0z" fill="#fff" />
          <path d="M2 0h32v16H2z" fill="#000" />
          <path d="M2 8h6l3 6 5-11 5 11 5-11 3 5h5" fill="none" stroke="#35c8f0" strokeWidth="1.300" />
        </svg>
      </StatusBar>
      <Taskbar />
    </Screen>
  );
}
